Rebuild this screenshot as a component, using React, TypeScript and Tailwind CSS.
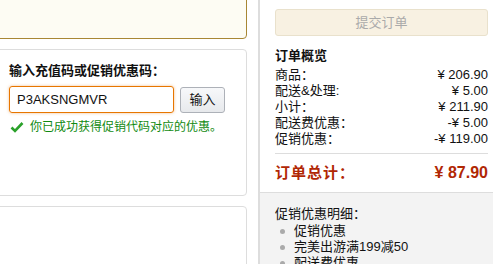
export default function App() {
  const rows = [
    { label: "商品：", value: "¥ 206.90" },
    { label: "配送&处理:", value: "¥ 5.00" },
    { label: "小计：", value: "¥ 211.90" },
    { label: "配送费优惠：", value: "-¥ 5.00" },
    { label: "促销优惠：", value: "-¥ 119.00" },
  ];

  return (
    <div
      className="flex h-[264px] w-[493px] overflow-hidden bg-white text-[13px] text-[#333]"
      style={{ fontFamily: '"Liberation Sans", Arial, "Noto Sans CJK SC", sans-serif' }}
    >
      {/* 左侧：充值码 */}
      <div className="flex w-[258px] shrink-0 flex-col pr-[11px]">
        <div className="-ml-[6px] -mt-[10px] h-[49px] shrink-0 rounded-[4px] border border-[#a88734] bg-[#fdfcf3]" />

        <div className="-ml-[6px] mt-[10px] h-[147px] shrink-0 rounded-[4px] border border-[#ddd] pl-[14px] pt-[13px]">
          <div className="text-[13px] font-bold leading-4 text-[#111]">输入充值码或促销优惠码：</div>
          <div className="mt-[7px] flex items-center gap-[6px]">
            <div className="flex h-[27px] w-[165px] items-center rounded-[3px] border border-[#e77600] px-[7px] text-[13px] text-[#111] shadow-[0_0_3px_rgba(228,121,17,0.5)]">
              P3AKSNGMVR
            </div>
            <div className="flex h-[26px] w-[45px] items-center justify-center rounded-[3px] border border-[#adb1b8] bg-gradient-to-b from-[#f7f8fa] to-[#e7e9ec] text-[13px] text-[#111]">
              输入
            </div>
          </div>
          <div className="mt-[6px] flex items-center gap-[6px] pl-[1px] text-[12px] leading-4 text-[#118a11]">
            <svg width="14" height="12" viewBox="0 0 14 12">
              <path d="M1.5 6.5 L5 10 L12.5 2" fill="none" stroke="#2ba12b" strokeWidth="2.6" />
            </svg>
            <span>你已成功获得促销代码对应的优惠。</span>
          </div>
        </div>

        <div className="-ml-[6px] mt-[10px] h-[80px] shrink-0 rounded-[4px] border border-[#ddd]" />
      </div>

      {/* 右侧：订单概览 */}
      <div className="flex flex-1 flex-col border-l-2 border-[#ddd]">
        <div className="pl-[15px] pr-[5px] pt-[9px]">
          <div className="flex h-[27px] items-center justify-center rounded-[3px] border border-[#e9e1cc] bg-[#f8f1e2] text-[13px] text-[#aaa]">
            提交订单
          </div>
          <div className="mt-[11px] text-[13px] font-bold leading-[18px] text-[#111]">订单概览</div>
          <div className="mt-[2px] flex flex-col">
            {rows.map((r) => (
              <div key={r.label} className="flex h-4 items-center justify-between leading-4 text-[#111]">
                <span>{r.label}</span>
                <span>{r.value}</span>
              </div>
            ))}
          </div>
          <div className="mt-[6px] border-t border-[#ddd]" />
          <div className="flex h-[38px] items-center justify-between text-[16px] font-bold text-[#b12704]">
            <span className="text-[15px] tracking-[1px]">订单总计：</span>
            <span>¥ 87.90</span>
          </div>
        </div>
        <div className="flex-1 border-t border-[#ddd] bg-[#f3f3f3] pl-[15px] pt-[13px] text-[13px] leading-4 text-[#111]">
          <div>促销优惠明细：</div>
          <ul className="ml-[5px] mt-[1px]">
            {["促销优惠", "完美出游满199减50", "配送费优惠"].map((t) => (
              <li key={t} className="flex items-center gap-[9px]">
                <span className="h-[5px] w-[5px] rounded-full bg-[#aaa]" />
                <span>{t}</span>
              </li>
            ))}
          </ul>
        </div>
      </div>
    </div>
  );
}
